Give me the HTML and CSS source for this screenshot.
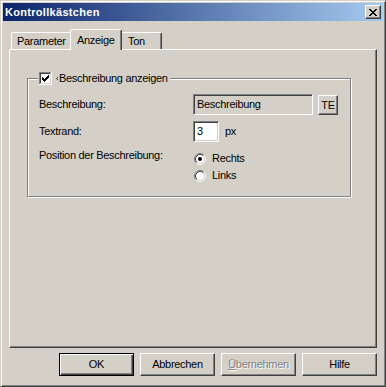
FILE: index.html
```html
<!DOCTYPE html>
<html lang="de">
<head>
<meta charset="utf-8">
<title>Kontrollkästchen</title>
<link rel="stylesheet" href="styles.css">
</head>
<body>
<div class="window">
  <div class="titlebar">
    <span class="title">Kontrollkästchen</span>
    <span class="btn close">
      <svg width="8" height="7" viewBox="0 0 8 7"><path fill="#000" d="M0 0h2v1H0z M6 0h2v1H6z M1 1h2v1H1z M5 1h2v1H5z M2 2h4v1H2z M3 3h2v1H3z M2 4h4v1H2z M1 5h2v1H1z M5 5h2v1H5z M0 6h2v1H0z M6 6h2v1H6z"/></svg>
    </span>
  </div>
  <div class="client">
    <div class="tabs">
      <div class="tab t-param">Parameter</div>
      <div class="tab t-anz active">Anzeige</div>
      <div class="tab t-ton">Ton</div>
    </div>
    <div class="pane">
      <div class="group">
        <div class="legend">
          <svg class="check" width="13" height="13" viewBox="0 0 13 13" shape-rendering="crispEdges">
            <rect x="0" y="0" width="13" height="13" fill="#fff"/>
            <rect x="0" y="0" width="12" height="1" fill="#808080"/>
            <rect x="0" y="0" width="1" height="12" fill="#808080"/>
            <rect x="1" y="1" width="10" height="1" fill="#404040"/>
            <rect x="1" y="1" width="1" height="10" fill="#404040"/>
            <rect x="11" y="1" width="1" height="11" fill="#d4d0c8"/>
            <rect x="1" y="11" width="11" height="1" fill="#d4d0c8"/>
            <rect x="3" y="5" width="1" height="3" fill="#000"/>
            <rect x="4" y="6" width="1" height="3" fill="#000"/>
            <rect x="5" y="7" width="1" height="3" fill="#000"/>
            <rect x="6" y="6" width="1" height="3" fill="#000"/>
            <rect x="7" y="5" width="1" height="3" fill="#000"/>
            <rect x="8" y="4" width="1" height="3" fill="#000"/>
            <rect x="9" y="3" width="1" height="3" fill="#000"/>
          </svg>
          <svg class="focusmark" width="2" height="3" viewBox="0 0 2 3" shape-rendering="crispEdges"><rect x="1" y="0" width="1" height="1" fill="#404040"/><rect x="0" y="1" width="1" height="1" fill="#404040"/><rect x="1" y="2" width="1" height="1" fill="#404040"/></svg>
          <span class="legend-text">Beschreibung anzeigen</span>
        </div>
        <div class="row">
          <span class="lbl">Beschreibung:</span>
          <span class="field disabled">Beschreibung</span>
          <span class="btn small">TE</span>
        </div>
        <div class="row r2">
          <span class="lbl">Textrand:</span>
          <span class="field num">3</span>
          <span class="unit">px</span>
        </div>
        <div class="row r3">
          <span class="lbl lbl-pos">Position der Beschreibung:</span>
          <div class="radios">
            <div class="radio">
              <svg width="12" height="12" viewBox="0 0 12 12">
                <circle cx="6" cy="6" r="4.2" fill="#fff"/>
                <path d="M2.11 9.89 A5.5 5.5 0 0 1 9.89 2.11" fill="none" stroke="#808080"/>
                <path d="M9.89 2.11 A5.5 5.5 0 0 1 2.11 9.89" fill="none" stroke="#fff"/>
                <path d="M2.82 9.18 A4.5 4.5 0 0 1 9.18 2.82" fill="none" stroke="#404040"/>
                <path d="M9.18 2.82 A4.5 4.5 0 0 1 2.82 9.18" fill="none" stroke="#d4d0c8"/>
                <circle cx="6" cy="6" r="2" fill="#000"/>
              </svg>
              <span class="radio-text">Rechts</span>
            </div>
            <div class="radio">
              <svg width="12" height="12" viewBox="0 0 12 12">
                <circle cx="6" cy="6" r="4.2" fill="#fff"/>
                <path d="M2.11 9.89 A5.5 5.5 0 0 1 9.89 2.11" fill="none" stroke="#808080"/>
                <path d="M9.89 2.11 A5.5 5.5 0 0 1 2.11 9.89" fill="none" stroke="#fff"/>
                <path d="M2.82 9.18 A4.5 4.5 0 0 1 9.18 2.82" fill="none" stroke="#404040"/>
                <path d="M9.18 2.82 A4.5 4.5 0 0 1 2.82 9.18" fill="none" stroke="#d4d0c8"/>
              </svg>
              <span class="radio-text">Links</span>
            </div>
          </div>
        </div>
      </div>
    </div>
    <div class="buttons">
      <span class="btn push default">OK</span>
      <span class="btn push">Abbrechen</span>
      <span class="btn push disabled-btn"><u>Ü</u>bernehmen</span>
      <span class="btn push">Hilfe</span>
    </div>
  </div>
</div>
</body>
</html>
```
FILE: styles.css
```css
html, body {
  margin: 0;
  padding: 0;
  background: #d4d0c8;
}

.window {
  width: 386px;
  height: 387px;
  box-sizing: border-box;
  border: 1px solid;
  border-color: #d4d0c8 #404040 #404040 #d4d0c8;
  box-shadow: inset 1px 1px #fff, inset -1px -1px #808080;
  padding: 2px;
  background: #d4d0c8;
  display: flex;
  flex-direction: column;
  font-family: "Liberation Sans", Arial, sans-serif;
  font-size: 11px;
  line-height: 13px;
  letter-spacing: -0.3px;
  color: #000;
}

.titlebar {
  height: 18px;
  flex: none;
  display: flex;
  align-items: center;
  justify-content: space-between;
  padding: 0 2px;
  background: linear-gradient(to right, #0a246a, #a6caf0);
}

.title {
  color: #fff;
  font-weight: bold;
  letter-spacing: 0.3px;
}

.btn {
  box-sizing: border-box;
  border: 1px solid;
  border-color: #fff #404040 #404040 #fff;
  box-shadow: inset -1px -1px #808080;
  background: #d4d0c8;
  display: flex;
  align-items: center;
  justify-content: center;
}

.close {
  width: 16px;
  height: 14px;
}

.client {
  padding: 8px 6px 0;
  display: flex;
  flex-direction: column;
}

.tabs {
  display: flex;
  align-items: flex-end;
  height: 20px;
  padding-left: 2px;
}

.tab {
  height: 17px;
  box-sizing: border-box;
  border: 1px solid;
  border-bottom: 0;
  border-color: #fff #404040 transparent #fff;
  box-shadow: inset -1px 0 #808080;
  border-radius: 2px 2px 0 0;
  background: #d4d0c8;
  display: flex;
  align-items: center;
}

.t-param {
  width: 61px;
  padding-left: 5px;
}

.t-anz {
  width: 48px;
  padding-left: 4px;
}

.t-ton {
  width: 42px;
  padding-left: 7px;
}

.tab.active {
  width: 52px;
  height: 21px;
  margin: 0 -2px -1px;
  padding-left: 6px;
  position: relative;
  z-index: 1;
}

.pane {
  height: 299px;
  box-sizing: border-box;
  border: 1px solid;
  border-color: #fff #404040 #404040 #fff;
  box-shadow: inset -1px -1px #808080;
  padding: 28px 0 0 17px;
}

.group {
  position: relative;
  width: 324px;
  height: 119px;
  box-sizing: border-box;
  border: 1px solid #808080;
  box-shadow: inset 1px 1px #fff, 1px 1px #fff;
  padding: 15px 0 0 11px;
}

.legend {
  position: absolute;
  left: 10px;
  top: -7px;
  height: 13px;
  display: flex;
  align-items: center;
  background: #d4d0c8;
  padding: 0 2px 0 1px;
}

.check {
  display: block;
  flex: none;
}

.focusmark {
  display: block;
  margin-left: 4px;
}

.legend-text {
  margin-left: 1px;
}

.row {
  display: flex;
  align-items: center;
  height: 21px;
}

.lbl {
  width: 154px;
  flex: none;
}

.r2 {
  margin-top: 6px;
}

.r3 {
  margin-top: 8px;
  height: auto;
  align-items: flex-start;
}

.lbl-pos {
  margin-top: -1px;
}

.field {
  box-sizing: border-box;
  height: 21px;
  border: 1px solid;
  border-color: #808080 #fff #fff #808080;
  box-shadow: inset 1px 1px #404040, inset -1px -1px #d4d0c8;
  padding: 0 3px;
  display: flex;
  align-items: center;
}

.field.disabled {
  width: 120px;
  background: #d4d0c8;
}

.field.num {
  width: 26px;
  background: #fff;
}

.small {
  width: 20px;
  height: 20px;
  margin-left: 5px;
  align-self: flex-end;
}

.unit {
  margin-left: 6px;
}

.radios {
  display: flex;
  flex-direction: column;
}

.radio {
  height: 17px;
  display: flex;
  align-items: center;
}

.radio svg {
  display: block;
  margin-left: 1px;
}

.radio-text {
  margin-left: 6px;
}

.buttons {
  display: flex;
  justify-content: flex-end;
  gap: 6px;
  margin-top: 5px;
}

.push {
  width: 75px;
  height: 23px;
}

.push.default {
  border-color: #000;
  box-shadow: inset 1px 1px #fff, inset -1px -1px #404040, inset -2px -2px #808080;
}

.disabled-btn {
  color: #808080;
  text-shadow: 1px 1px #fff;
}
```
